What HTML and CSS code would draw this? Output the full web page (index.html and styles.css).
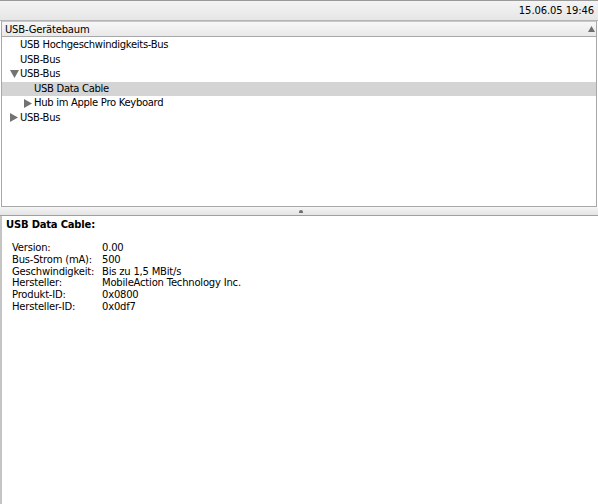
FILE: index.html
```html
<!DOCTYPE html>
<html lang="de">
<head>
<meta charset="utf-8">
<title>USB-Gerätebaum</title>
<link rel="stylesheet" href="styles.css">
</head>
<body>
<div class="window">
  <div class="toolbar"><span class="date">15.06.05 19:46</span></div>
  <div class="tree-pane">
    <div class="tree-header">
      <span>USB-Gerätebaum</span>
      <svg class="sort" width="7" height="6" viewBox="0 0 7 6"><path d="M3.5 0 L7 6 L0 6 Z" fill="#6e6e6e"/></svg>
    </div>
    <div class="tree">
      <div class="row lvl0"><span class="tw"></span>USB Hochgeschwindigkeits-Bus</div>
      <div class="row lvl0"><span class="tw"></span>USB-Bus</div>
      <div class="row lvl0"><span class="tw"><svg width="9" height="8" viewBox="0 0 9 8"><path d="M0 0 L9 0 L4.5 8 Z" fill="#737373"/></svg></span>USB-Bus</div>
      <div class="row lvl1 selected"><span class="tw"></span>USB Data Cable</div>
      <div class="row lvl1"><span class="tw"><svg width="8" height="9" viewBox="0 0 8 9"><path d="M0 0 L8 4.5 L0 9 Z" fill="#737373"/></svg></span>Hub im Apple Pro Keyboard</div>
      <div class="row lvl0"><span class="tw"><svg width="8" height="9" viewBox="0 0 8 9"><path d="M0 0 L8 4.5 L0 9 Z" fill="#737373"/></svg></span>USB-Bus</div>
    </div>
  </div>
  <div class="splitter"><span class="dimple"></span></div>
  <div class="detail">
    <div class="detail-title">USB Data Cable:</div>
    <dl class="props">
      <dt>Version:</dt><dd>0.00</dd>
      <dt>Bus-Strom (mA):</dt><dd>500</dd>
      <dt>Geschwindigkeit:</dt><dd>Bis zu 1,5 MBit/s</dd>
      <dt>Hersteller:</dt><dd>MobileAction Technology Inc.</dd>
      <dt>Produkt-ID:</dt><dd>0x0800</dd>
      <dt>Hersteller-ID:</dt><dd>0x0df7</dd>
    </dl>
  </div>
</div>
</body>
</html>
```

FILE: styles.css
```css
html, body {
  margin: 0;
  padding: 0;
  background: #ffffff;
}
body {
  font-family: "DejaVu Sans", "Liberation Sans", sans-serif;
  font-size: 10px;
  color: #000;
  width: 598px;
  height: 504px;
  overflow: hidden;
}
.window {
  display: flex;
  flex-direction: column;
  height: 504px;
}
.toolbar {
  height: 21px;
  box-sizing: border-box;
  border-top: 1px solid #9a9a9a;
  border-bottom: 1px solid #b4b4b4;
  background: linear-gradient(#f4f4f4, #e6e6e6);
  display: flex;
  justify-content: flex-end;
  align-items: center;
  padding-right: 4px;
  letter-spacing: -0.1px;
}
.tree-pane {
  height: 186px;
  box-sizing: border-box;
  border: 1px solid #a8a8a8;
  border-top: none;
  margin: 0 1px 0 1px;
  display: flex;
  flex-direction: column;
}
.tree-header {
  height: 16px;
  box-sizing: border-box;
  border-top: 1px solid #c8c8c8;
  border-bottom: 1px solid #a8a8a8;
  background: linear-gradient(#f7f7f7, #e9e9e9);
  display: flex;
  align-items: center;
  justify-content: space-between;
  padding: 1px 1px 0 3px;
  letter-spacing: -0.2px;
}
.sort { margin-top: -1px; }
.tree {
  padding-top: 1px;
  letter-spacing: -0.3px;
}
.row {
  height: 14.5px;
  line-height: 14.5px;
  display: flex;
  align-items: center;
  white-space: nowrap;
}
.row.selected { background: #d4d4d4; }
.tw {
  width: 11px;
  height: 14px;
  box-sizing: border-box;
  padding-left: 1px;
  display: inline-flex;
  align-items: center;
  justify-content: flex-start;
  flex: none;
}
.lvl0 { padding-left: 7px; }
.lvl1 { padding-left: 21px; }
.splitter {
  height: 9px;
  box-sizing: border-box;
  border-bottom: 1px solid #a0a0a0;
  background: linear-gradient(#f5f5f5, #e4e4e4);
  display: flex;
  justify-content: center;
  align-items: center;
  padding-left: 4px;
}
.dimple {
  width: 4px;
  height: 3px;
  border-radius: 2px 2px 0 0;
  background: #707070;
}
.detail {
  flex: 1;
  border-left: 2px solid #c4c4c4;
  padding: 2px 0 0 4px;
}
.detail-title {
  font-weight: bold;
  line-height: 14px;
  letter-spacing: -0.2px;
}
.props {
  margin: 10px 0 0 6px;
  display: grid;
  grid-template-columns: 90px auto;
  grid-auto-rows: 11.8px;
  line-height: 11.8px;
  letter-spacing: -0.2px;
}
.props dt, .props dd { margin: 0; white-space: nowrap; }
```
